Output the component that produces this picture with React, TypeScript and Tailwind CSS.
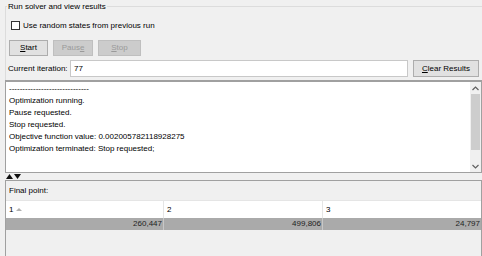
import React from "react";

function Btn({ children, disabled, className = "" }: { children: React.ReactNode; disabled?: boolean; className?: string }) {
  return (
    <div
      className={
        "flex items-center justify-center border " +
        (disabled ? "bg-[#cccccc] border-[#bfbfbf] text-[#9a9a9a] " : "bg-[#e1e1e1] border-[#adadad] text-black ") +
        className
      }
    >
      {children}
    </div>
  );
}

export default function App() {
  return (
    <div className="w-[482px] h-[256px] bg-[#f0f0f0] overflow-hidden flex flex-col pl-[5px] pt-[6px] font-['Liberation_Sans',Arial,sans-serif] text-[8px] leading-[12px] text-black">
      {/* Group box top part */}
      <div className="relative border-l border-t border-[#dcdcdc] h-[74px] flex flex-col pl-[5px] pt-[14px]">
        <span className="absolute -top-[6px] left-[1px] bg-[#f0f0f0] px-[1px]">Run solver and view results</span>
        <div className="flex items-center gap-[3px] h-[9px]">
          <div className="w-[9px] h-[9px] border border-[#333333] bg-white"></div>
          <span>Use random states from previous run</span>
        </div>
        <div className="flex gap-[5px] mt-[10px] -ml-[2px]">
          <Btn className="w-[39px] h-[16px]"><span><u>S</u>tart</span></Btn>
          <Btn disabled className="w-[40px] h-[16px]"><span>Paus<u>e</u></span></Btn>
          <Btn disabled className="w-[43px] h-[16px]"><span><u>S</u>top</span></Btn>
        </div>
        <div className="flex items-center mt-[4px] -ml-[3px] h-[17px]">
          <span className="w-[62px]">Current iteration:</span>
          <div className="w-[338px] h-[17px] bg-white border border-[#c8c8c8] pl-[3px] flex items-center">77</div>
          <Btn className="ml-[5px] w-[66px] h-[17px]"><span><u>C</u>lear Results</span></Btn>
        </div>
      </div>

      {/* Log box */}
      <div className="h-[93px] w-[477px] flex border border-[#a0a0a0] border-t-2 bg-white">
        <div className="flex-1 pl-[3px] pt-[1px] flex flex-col">
          <span>------------------------------</span>
          <span>Optimization running.</span>
          <span>Pause requested.</span>
          <span>Stop requested.</span>
          <span>Objective function value: 0.002005782118928275</span>
          <span>Optimization terminated: Stop requested;</span>
        </div>
        <div className="w-[11px] bg-[#f0f0f0] flex flex-col items-center">
          <div className="h-[12px] flex items-center justify-center">
            <svg width="7" height="5" viewBox="0 0 7 5"><path d="M0.5 4 L3.5 1 L6.5 4" fill="none" stroke="#606060" strokeWidth="1.2" /></svg>
          </div>
          <div className="w-[9px] h-[56px] bg-[#cdcdcd]"></div>
          <div className="flex-1"></div>
          <div className="h-[12px] flex items-center justify-center">
            <svg width="7" height="5" viewBox="0 0 7 5"><path d="M0.5 1 L3.5 4 L6.5 1" fill="none" stroke="#606060" strokeWidth="1.2" /></svg>
          </div>
        </div>
      </div>

      {/* Splitter */}
      <div className="h-[7px] flex items-center gap-[1px] pl-[1px]">
        <svg width="7" height="5" viewBox="0 0 7 5"><path d="M0 5 L3.5 0 L7 5Z" fill="#111" /></svg>
        <svg width="7" height="5" viewBox="0 0 7 5"><path d="M0 0 L3.5 5 L7 0Z" fill="#111" /></svg>
      </div>

      {/* Bottom panel */}
      <div className="flex-1 w-[477px] border border-[#a0a0a0] border-b-0 flex flex-col">
        <div className="h-[19px] flex items-center pl-[3px]">Final point:</div>
        <div className="flex h-[18px] bg-white border-t border-[#e5e5e5]">
          <div className="w-[158px] border-r border-[#e5e5e5] flex items-center pl-[3px] gap-[3px]">
            <span>1</span>
            <svg width="6" height="3" viewBox="0 0 6 3"><path d="M0 3 L3 0 L6 3Z" fill="#b0b0b0" /></svg>
          </div>
          <div className="w-[159px] border-r border-[#e5e5e5] flex items-center pl-[3px]">2</div>
          <div className="flex-1 flex items-center pl-[3px]">3</div>
        </div>
        <div className="flex h-[12px] bg-[#aaaaaa] text-[#222]">
          <div className="w-[158px] border-r border-[#c8c8c8] flex items-center justify-end pr-[1px]">260,447</div>
          <div className="w-[159px] border-r border-[#c8c8c8] flex items-center justify-end pr-[1px]">499,806</div>
          <div className="flex-1 flex items-center justify-end pr-[1px]">24,797</div>
        </div>
      </div>
    </div>
  );
}
